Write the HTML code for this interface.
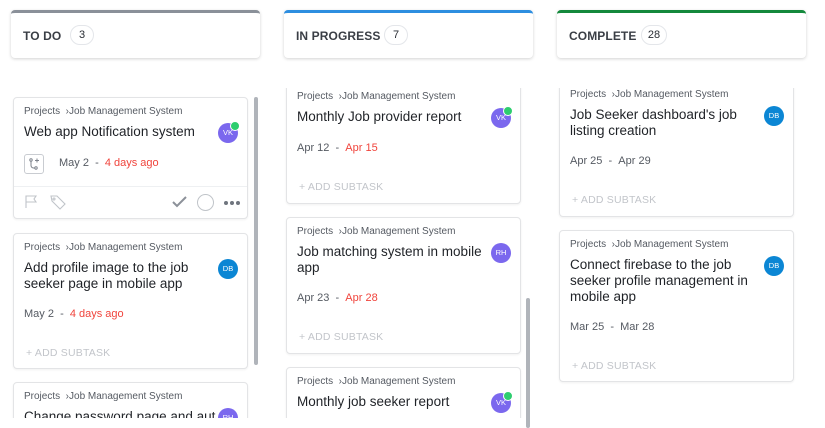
<!DOCTYPE html>
<html><head><meta charset="utf-8"><style>
body{margin:0;width:825px;height:418px;background:#fff;font-family:"Liberation Sans",sans-serif;overflow:hidden;position:relative;color:#292d34}
.hd{position:absolute;top:10px;width:249px;height:48px;background:#fff;border-radius:4px;box-shadow:0 1px 3px rgba(0,0,0,.18);box-sizing:border-box;border-top:3px solid #8a9099}
.hd .t{position:absolute;left:12px;top:16px;font-size:12px;font-weight:bold;letter-spacing:.1px;color:#3a3e45}
.hd .c{position:absolute;top:12px;height:20px;min-width:24px;padding:0 5px;box-sizing:border-box;border:1px solid #e4e6ea;border-radius:10px;font-size:11px;line-height:18px;text-align:center}
.clip{position:absolute;top:88px;height:330px;overflow:hidden}
.card{position:absolute;left:2px;width:235px;background:#fff;border:1px solid #e3e4e6;border-radius:4px;box-shadow:0 1px 2px rgba(0,0,0,.06);box-sizing:border-box}
.bc{position:absolute;left:10px;top:7px;font-size:10px;line-height:14px;color:#555a62;white-space:nowrap}
.ti{position:absolute;left:10px;top:26px;width:192px;font-size:13.5px;line-height:16px;color:#1f2227}
.av{position:absolute;right:9px;top:25px;width:20px;height:20px;border-radius:50%;color:#fff;font-size:7.5px;line-height:20px;text-align:center}
.vk{background:#7b68ee}.db{background:#0b86d4}
.dot{position:absolute;right:-2px;top:-2px;width:8px;height:8px;border-radius:50%;background:#2ecd6f;border:1px solid #fff}
.dt{position:absolute;left:10px;font-size:11px;line-height:14px;color:#555a62;white-space:nowrap}
.red{color:#f0443c}
.st{position:absolute;left:12px;font-size:10.5px;line-height:14px;color:#c2c5ca;letter-spacing:.2px}
.sb{position:absolute;width:4px;background:#b0b4ba;border-radius:2px}
.d3{position:absolute;top:103px;width:4px;height:4px;border-radius:50%;background:#6f757e}
</style></head><body>
<div class="hd" style="left:11px;border-top-color:#8a9099"><span class="t">TO DO</span><span class="c" style="left:59px">3</span></div>
<div class="hd" style="left:284px;border-top-color:#2d8ee0"><span class="t">IN PROGRESS</span><span class="c" style="left:100px">7</span></div>
<div class="hd" style="left:557px;border-top-color:#14893c"><span class="t">COMPLETE</span><span class="c" style="left:84px;min-width:26px">28</span></div>

<!-- col1 -->
<div class="clip" style="left:11px;width:250px">
 <div class="card" style="top:9px;height:122px">
  <div class="bc">Projects &nbsp;›Job Management System</div>
  <div class="ti">Web app Notification system</div>
  <div class="av vk">VK<span class="dot"></span></div>
  <div style="position:absolute;left:10px;top:56px;width:18px;height:18px;border:1px solid #c9ccd1;border-radius:3px">
   <svg width="18" height="18" viewBox="0 0 18 18" fill="none" stroke="#7c828b" stroke-width="1"><circle cx="6" cy="5" r="1.2"/><circle cx="11" cy="13" r="1.2"/><path d="M6 6.5v4a2.5 2.5 0 0 0 2.5 2.5h1.2M12 3.5v4M10 5.5h4"/></svg></div>
  <div class="dt" style="left:45px;top:58px">May 2 &nbsp;- &nbsp;<span class="red">4 days ago</span></div>
  <div style="position:absolute;left:0;right:0;top:88px;border-top:1px solid #eef0f2"></div>
  <svg style="position:absolute;left:10px;top:97px" width="14" height="14" viewBox="0 0 14 14" fill="none" stroke="#c0c4c9" stroke-width="1.1"><path d="M2 13V1h10l-2 3 2 3H2"/></svg>
  <svg style="position:absolute;left:35px;top:96px" width="18" height="16" viewBox="0 0 18 16" fill="none" stroke="#c0c4c9" stroke-width="1.1"><path d="M2 2h6l8 8-5 5-8-8z"/><circle cx="5" cy="5" r="1"/></svg>
  <svg style="position:absolute;left:158px;top:98px" width="15" height="12" viewBox="0 0 15 12" fill="none" stroke="#8c9199" stroke-width="2"><path d="M1 6l4 4 9-9"/></svg>
  <div style="position:absolute;left:183px;top:96px;width:15px;height:15px;border:1px solid #c0c4c9;border-radius:50%"></div>
  <div class="d3" style="left:210px"></div><div class="d3" style="left:216px"></div><div class="d3" style="left:222px"></div>
 </div>
 <div class="card" style="top:145px;height:136px">
  <div class="bc">Projects &nbsp;›Job Management System</div>
  <div class="ti">Add profile image to the job seeker page in mobile app</div>
  <div class="av db">DB</div>
  <div class="dt" style="top:73px">May 2 &nbsp;- &nbsp;<span class="red">4 days ago</span></div>
  <div class="st" style="top:112px">+ ADD SUBTASK</div>
 </div>
 <div class="card" style="top:294px;height:60px">
  <div class="bc">Projects &nbsp;›Job Management System</div>
  <div class="ti" style="width:192px;white-space:nowrap;overflow:hidden">Change password page and auto</div>
  <div class="av vk">RH</div>
 </div>
</div>
<div class="sb" style="left:254px;top:97px;height:268px"></div>

<!-- col2 -->
<div class="clip" style="left:284px;width:250px">
 <div class="card" style="top:-6px;height:122px">
  <div class="bc">Projects &nbsp;›Job Management System</div>
  <div class="ti">Monthly Job provider report</div>
  <div class="av vk">VK<span class="dot"></span></div>
  <div class="dt" style="top:58px">Apr 12 &nbsp;- &nbsp;<span class="red">Apr 15</span></div>
  <div class="st" style="top:97px">+ ADD SUBTASK</div>
 </div>
 <div class="card" style="top:129px;height:137px">
  <div class="bc">Projects &nbsp;›Job Management System</div>
  <div class="ti" style="width:196px">Job matching system in mobile app</div>
  <div class="av vk">RH</div>
  <div class="dt" style="top:73px">Apr 23 &nbsp;- &nbsp;<span class="red">Apr 28</span></div>
  <div class="st" style="top:112px">+ ADD SUBTASK</div>
 </div>
 <div class="card" style="top:279px;height:80px">
  <div class="bc">Projects &nbsp;›Job Management System</div>
  <div class="ti">Monthly job seeker report</div>
  <div class="av vk">VK<span class="dot"></span></div>
 </div>
</div>
<div class="sb" style="left:526px;top:298px;height:130px"></div>

<!-- col3 -->
<div class="clip" style="left:557px;width:250px">
 <div class="card" style="top:-8px;height:137px">
  <div class="bc">Projects &nbsp;›Job Management System</div>
  <div class="ti">Job Seeker dashboard's job listing creation</div>
  <div class="av db">DB</div>
  <div class="dt" style="top:73px">Apr 25 &nbsp;- &nbsp;Apr 29</div>
  <div class="st" style="top:112px">+ ADD SUBTASK</div>
 </div>
 <div class="card" style="top:142px;height:152px">
  <div class="bc">Projects &nbsp;›Job Management System</div>
  <div class="ti">Connect firebase to the job seeker profile management in mobile app</div>
  <div class="av db">DB</div>
  <div class="dt" style="top:89px">Mar 25 &nbsp;- &nbsp;Mar 28</div>
  <div class="st" style="top:128px">+ ADD SUBTASK</div>
 </div>
</div>
</body></html>
